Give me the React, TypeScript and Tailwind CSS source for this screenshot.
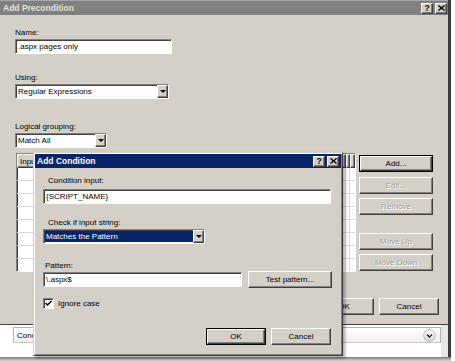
import React from "react";

const raised =
  "border border-t-white border-l-white border-r-[#404040] border-b-[#404040] shadow-[inset_-1px_-1px_0_#808080]";
const sunken =
  "border border-t-[#808080] border-l-[#808080] border-r-white border-b-white shadow-[inset_1px_1px_0_#404040]";

function Btn({
  children,
  w,
  h = 17,
  disabled,
  def,
}: {
  children: React.ReactNode;
  w: number;
  h?: number;
  disabled?: boolean;
  def?: boolean;
}) {
  const inner = (
    <div
      className={`flex items-center justify-center w-full h-full bg-[#d4d0c8] ${raised} ${
        disabled ? "text-[#a0a0a0] [text-shadow:1px_1px_0_#ffffff]" : "text-black"
      }`}
    >
      {children}
    </div>
  );
  return (
    <div
      style={{ width: w, height: h }}
      className={`shrink-0 ${def ? "border border-black" : ""}`}
    >
      {inner}
    </div>
  );
}

function Arrow() {
  return (
    <div className="w-0 h-0 border-l-[3px] border-r-[3px] border-t-[3px] border-l-transparent border-r-transparent border-t-black" />
  );
}

function Select({
  w,
  text,
  selected,
}: {
  w: number;
  text: string;
  selected?: boolean;
}) {
  return (
    <div style={{ width: w }} className={`h-[15px] flex bg-white ${sunken}`}>
      <div
        className={`flex-1 flex items-center pl-[1px] ml-[1px] my-[1px] whitespace-nowrap overflow-hidden ${
          selected ? "bg-[#0a246a] text-white" : "text-black"
        }`}
      >
        {text}
      </div>
      <div className={`w-[11px] h-full flex items-center justify-center bg-[#d4d0c8] ${raised}`}>
        <Arrow />
      </div>
    </div>
  );
}

function TitleBtns() {
  return (
    <div className="flex gap-[2px]">
      <div className={`w-[12px] h-[11px] bg-[#d4d0c8] ${raised} flex items-center justify-center text-[8.5px] font-bold leading-none text-black`}>
        ?
      </div>
      <div className={`w-[12px] h-[11px] bg-[#d4d0c8] ${raised} flex items-center justify-center`}>
        <svg width="7" height="6" viewBox="0 0 7 6">
          <path d="M0.5 0.5 L6.5 5.5 M6.5 0.5 L0.5 5.5" stroke="#000" strokeWidth="1.4" />
        </svg>
      </div>
    </div>
  );
}

function Grid() {
  const rows = Array.from({ length: 8 });
  return (
    <div className={`ml-[1px] w-[340px] h-[119px] bg-white flex flex-col overflow-hidden ${sunken}`}>
      <div className="h-[14px] flex bg-[#d4d0c8] shrink-0">
        <div className={`flex-1 flex items-center pl-[2px] ${raised}`}>Input</div>
        <div className={`w-[4px] ${raised}`} />
        <div className={`w-[5px] ${raised}`} />
      </div>
      {rows.map((_, i) => (
        <div key={i} className="h-[13px] shrink-0 flex border-b border-[#d8d8d8]">
          <div className="flex-1 border-r border-[#d8d8d8]" />
          <div className="w-[4px] border-r border-[#d8d8d8]" />
          <div className="w-[5px]" />
        </div>
      ))}
    </div>
  );
}

function InnerDialog() {
  return (
    <div className="absolute left-[33px] top-[152px] w-[310px] h-[204px] bg-[#d4d0c8] p-[1px] border border-t-[#d4d0c8] border-l-[#d4d0c8] border-r-[#404040] border-b-[#404040] shadow-[inset_1px_1px_0_#ffffff,inset_-1px_-1px_0_#808080,2px_2px_3px_rgba(0,0,0,0.35)] flex flex-col">
      <div className="h-[14px] bg-[#0a246a] flex items-center justify-between pl-[2px] pr-[2px] shrink-0">
        <span className="text-white font-bold text-[8.5px]">Add Condition</span>
        <TitleBtns />
      </div>
      <div className="flex flex-col pl-[8px]">
        <div className="ml-[5px] mt-[7px] h-[11px]">Condition input:</div>
        <div className={`mt-[3px] w-[288px] h-[15px] bg-white flex items-center pl-[2px] ${sunken}`}>
          {"{SCRIPT_NAME}"}
        </div>
        <div className="ml-[5px] mt-[13px] h-[11px]">Check if input string:</div>
        <div className="mt-[1px]">
          <Select w={162} text="Matches the Pattern" selected />
        </div>
        <div className="ml-[2px] mt-[16px] h-[11px]">Pattern:</div>
        <div className="h-[17px] flex items-center">
          <div className={`w-[199px] h-[15px] bg-white flex items-center pl-[2px] ${sunken}`}>\.aspx$</div>
          <div className="ml-[6px]">
            <Btn w={84}>Test pattern...</Btn>
          </div>
        </div>
        <div className="mt-[9px] h-[12px] flex items-center">
          <div className={`w-[11px] h-[11px] bg-white flex items-center justify-center ${sunken}`}>
            <svg width="7" height="7" viewBox="0 0 7 7">
              <path d="M0.5 3 L2.5 5 L6.5 1" stroke="#000" strokeWidth="1.5" fill="none" />
            </svg>
          </div>
          <span className="ml-[4px]">Ignore case</span>
        </div>
        <div className="mt-[19px] flex justify-end gap-[5px] pr-[10px]">
          <Btn w={60} def>
            OK
          </Btn>
          <Btn w={60}>Cancel</Btn>
        </div>
      </div>
    </div>
  );
}

export default function App() {
  return (
    <div className="w-[455px] h-[361px] bg-white overflow-hidden relative font-['Liberation_Sans',Arial,sans-serif] text-[8px] leading-[11px] text-black">
      <div className="flex h-[357px]">
        <div className="w-[448px] flex flex-col">
          {/* outer dialog */}
          <div className="h-[325px] bg-[#d4d0c8] flex flex-col border-b border-[#404040] shrink-0">
            <div className="h-[15px] bg-[#808080] border-t border-[#a8a8a8] flex items-center justify-between pl-[3px] pr-[1px] shrink-0">
              <span className="text-[#e4e0da] font-bold text-[8.5px]">Add Precondition</span>
              <TitleBtns />
            </div>
            <div className="flex flex-col pl-[15px]">
              <div className="mt-[12px] h-[11px]">Name:</div>
              <div className={`mt-[1px] w-[157px] h-[15px] bg-white flex items-center pl-[2px] ${sunken}`}>
                .aspx pages only
              </div>
              <div className="mt-[18px] h-[11px]">Using:</div>
              <div className="mt-[1px]">
                <Select w={154} text="Regular Expressions" />
              </div>
              <div className="mt-[22px] h-[11px]">Logical grouping:</div>
              <div className="mt-[1px]">
                <Select w={92} text="Match All" />
              </div>
              <div className="mt-[5px] flex">
                <Grid />
                <div className="ml-[3px] w-[74px] flex flex-col pt-[2px]">
                  <Btn w={74} def>
                    Add...
                  </Btn>
                  <div className="mt-[5px]">
                    <Btn w={74} disabled>
                      Edit...
                    </Btn>
                  </div>
                  <div className="mt-[4px]">
                    <Btn w={74} disabled>
                      Remove
                    </Btn>
                  </div>
                  <div className="mt-[18px]">
                    <Btn w={74} disabled>
                      Move Up
                    </Btn>
                  </div>
                  <div className="mt-[4px]">
                    <Btn w={74} disabled>
                      Move Down
                    </Btn>
                  </div>
                </div>
              </div>
              <div className="mt-[26px] flex justify-end gap-[5px] pr-[9px]">
                <Btn w={60}>OK</Btn>
                <Btn w={60}>Cancel</Btn>
              </div>
            </div>
          </div>
          {/* window behind */}
          <div className="flex-1 flex bg-white">
            <div className="flex-1 pl-[13px] pt-[2px]">
              <div className="h-[16px] flex items-center justify-between border border-[#b4b4b4] border-b-[#c8c8c8] bg-gradient-to-b from-white to-[#f4eeee] pl-[3px] pr-[4px]">
                <span>Conditions</span>
                <svg width="13" height="13" viewBox="0 0 13 13">
                  <defs>
                    <linearGradient id="cg" x1="0" y1="0" x2="0" y2="1">
                      <stop offset="0" stopColor="#ffffff" />
                      <stop offset="1" stopColor="#d6d6d6" />
                    </linearGradient>
                  </defs>
                  <circle cx="6.5" cy="6.5" r="5.8" fill="url(#cg)" stroke="#a8a8a8" strokeWidth="0.8" />
                  <path d="M4 5.5 L6.5 8 L9 5.5" stroke="#222" strokeWidth="1.4" fill="none" />
                </svg>
              </div>
            </div>
            <div className="w-[7px] bg-[#e6e6e6]" />
          </div>
        </div>
        <div className="w-[3px] bg-[#3c3c3c]" />
        <div className="flex-1 bg-white" />
      </div>
      <div className="h-[4px] w-[451px] bg-gradient-to-b from-[#7a7a7a] to-[#d8d8d8]" />
      <InnerDialog />
    </div>
  );
}
